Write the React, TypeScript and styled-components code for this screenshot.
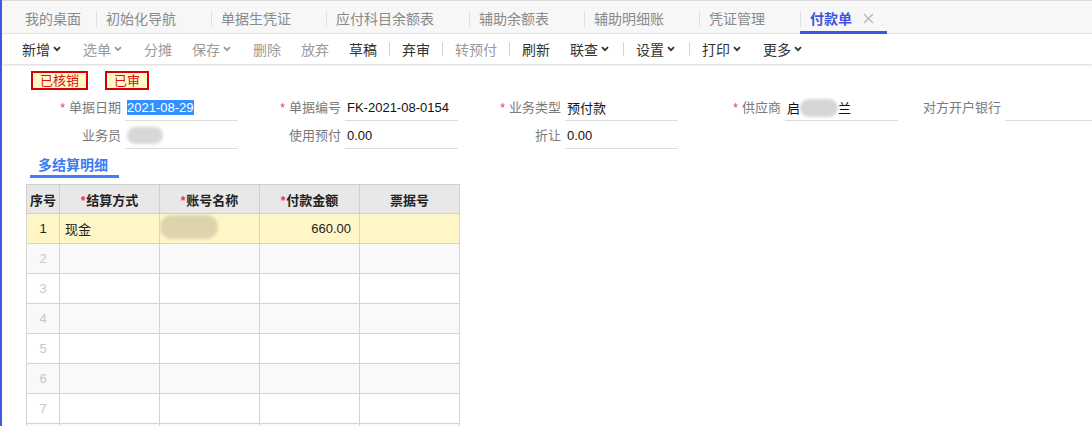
import { Fragment } from 'react';
import styled, { createGlobalStyle, css } from 'styled-components';

const GlobalStyle = createGlobalStyle`
  html, body {
    margin: 0;
    padding: 0;
    background: #fff;
  }
  body {
    font-family: "Liberation Sans", "Noto Sans CJK SC", sans-serif;
    font-size: 13px;
    color: #222;
    overflow: hidden;
  }
`;

const Page = styled.div`
  min-height: 100vh;
  border-left: 2px solid #4157e0;
  box-sizing: border-box;
`;

const TabBar = styled.div`
  display: flex;
  align-items: stretch;
  height: 32px;
  padding-left: 13px;
  background: #f7f7f8;
  border-top: 1px solid #dcdcdc;
  border-bottom: 1px solid #e5e5ee;
`;

const Tab = styled.div<{ $active?: boolean; $first?: boolean }>`
  position: relative;
  display: flex;
  align-items: center;
  padding: 2px ${p => (p.$first ? '15px' : '0')} 0 10px;
  font-size: 14px;
  color: #8a8a8a;
  white-space: nowrap;

  ${p =>
    !p.$first &&
    css`
      &::before {
        content: '';
        position: absolute;
        left: 0;
        top: 10px;
        width: 1px;
        height: 16px;
        background: #e0e0e0;
      }
    `}

  ${p =>
    p.$active &&
    css`
      color: #3f55e0;
      font-weight: bold;
      &::after {
        content: '';
        position: absolute;
        left: 0;
        right: 0;
        bottom: -1px;
        height: 3px;
        background: #3f55e0;
      }
    `}
`;

const TabClose = styled.span<{ $visible?: boolean }>`
  display: inline-flex;
  align-items: center;
  width: 35px;
  padding-left: 11px;
  box-sizing: border-box;
  visibility: ${p => (p.$visible ? 'visible' : 'hidden')};
`;

const Toolbar = styled.div`
  display: flex;
  align-items: center;
  height: 30px;
  padding-left: 10px;
  background: #fff;
  box-shadow: 0 1px 2px rgba(0, 0, 0, 0.16);
`;

const ToolButton = styled.div<{ $disabled?: boolean }>`
  display: flex;
  align-items: center;
  padding: 0 10px;
  font-size: 14px;
  color: ${p => (p.$disabled ? '#9a9a9a' : '#333')};
  white-space: nowrap;
  svg {
    margin: 0 2px 0 3px;
  }
`;

const ToolSep = styled.div`
  width: 1px;
  height: 14px;
  margin: 0 2px;
  background: #d4d4d4;
`;

const Form = styled.div`
  padding: 7px 0 0 16px;
`;

const Badges = styled.div`
  display: flex;
  gap: 17px;
  padding-left: 13px;
  margin-bottom: 5px;
`;

const Badge = styled.div`
  height: 19px;
  line-height: 15px;
  padding: 0 7px;
  border: 2px solid #d60000;
  box-sizing: border-box;
  background: #fffac8;
  color: #e01010;
  font-size: 13px;
`;

const FieldGrid = styled.div`
  display: grid;
  grid-template-columns: repeat(5, 220px);
  row-gap: 2px;
`;

const Field = styled.div`
  display: flex;
  align-items: stretch;
  height: 26px;
`;

const Label = styled.div`
  width: 107px;
  padding-right: 4px;
  box-sizing: border-box;
  text-align: right;
  line-height: 26px;
  color: #7a7a7a;
  white-space: nowrap;
`;

const Star = styled.span<{ $tight?: boolean }>`
  color: #f0305a;
  margin-right: ${p => (p.$tight ? '1px' : '4px')};
  font-size: 12px;
`;

const Input = styled.div`
  display: flex;
  align-items: center;
  width: 113px;
  padding-left: 2px;
  box-sizing: border-box;
  border-bottom: 1px solid #dcdcdc;
  white-space: nowrap;
  overflow: hidden;
  color: #111;
`;

const Selected = styled.span`
  background: #3390ff;
  color: #fff;
  line-height: 15px;
`;

const Blur = styled.span<{ $w: number; $h: number; $color: string }>`
  display: inline-block;
  width: ${p => p.$w}px;
  height: ${p => p.$h}px;
  border-radius: ${p => p.$h / 2}px;
  background: ${p => p.$color};
  filter: blur(1.5px);
`;

const SectionTabs = styled.div`
  display: flex;
  margin: 5px 0 6px 12px;
`;

const SectionTab = styled.div`
  padding: 0 11px 2px 8px;
  height: 24px;
  line-height: 22px;
  box-sizing: border-box;
  border-bottom: 3px solid #3b82f6;
  color: #3b7df0;
  font-size: 14px;
  font-weight: bold;
`;

const Grid = styled.table`
  margin-left: 8px;
  border-collapse: collapse;
  table-layout: fixed;
  width: 434px;
`;

const Th = styled.th<{ $w: number }>`
  width: ${p => p.$w - 1}px;
  height: 28px;
  padding: 0;
  border: 1px solid #cfcfcf;
  background: #e8e8e8;
  font-weight: bold;
  font-size: 13px;
  color: #222;
  text-align: center;
`;

const Row = styled.tr<{ $tone: 'active' | 'odd' | 'even' }>`
  height: 30px;
  background: ${p =>
    p.$tone === 'active' ? '#fff6c8' : p.$tone === 'odd' ? '#f9f9f9' : '#fff'};
`;

const Td = styled.td<{ $align?: 'left' | 'right' | 'center'; $muted?: boolean; $flush?: boolean }>`
  padding: 0 ${p => (p.$align === 'right' ? '8px' : '5px')};
  ${p => p.$flush && 'padding-left: 0;'}
  border: 1px solid #d4d4d4;
  text-align: ${p => p.$align || 'left'};
  color: ${p => (p.$muted ? '#c8c8c8' : '#222')};
  font-size: 13px;
  white-space: nowrap;
  overflow: hidden;
`;

const Chevron = () => (
  <svg width="8" height="6" viewBox="0 0 8 6">
    <path d="M1 1.2 L4 4.2 L7 1.2" fill="none" stroke="currentColor" strokeWidth="1.8" />
  </svg>
);

const CloseIcon = () => (
  <svg width="11" height="11" viewBox="0 0 11 11">
    <path d="M1 1 L10 10 M10 1 L1 10" stroke="#b8b8b8" strokeWidth="1.4" />
  </svg>
);

const tabs = ['我的桌面', '初始化导航', '单据生凭证', '应付科目余额表', '辅助余额表', '辅助明细账', '凭证管理', '付款单'];

type Tool = { label: string; menu?: boolean; disabled?: boolean; sep?: boolean };

const tools: Tool[] = [
  { label: '新增', menu: true },
  { label: '选单', menu: true, disabled: true },
  { label: '分摊', disabled: true },
  { label: '保存', menu: true, disabled: true },
  { label: '删除', disabled: true },
  { label: '放弃', disabled: true },
  { label: '草稿', sep: true },
  { label: '弃审', sep: true },
  { label: '转预付', disabled: true, sep: true },
  { label: '刷新' },
  { label: '联查', menu: true, sep: true },
  { label: '设置', menu: true, sep: true },
  { label: '打印', menu: true },
  { label: '更多', menu: true },
];

export default function App() {
  return (
    <Page>
      <GlobalStyle />
      <TabBar>
        {tabs.map((t, i) => {
          const active = i === tabs.length - 1;
          return (
            <Tab key={t} $first={i === 0} $active={active}>
              {t}
              {i > 0 && (
                <TabClose $visible={active}>
                  <CloseIcon />
                </TabClose>
              )}
            </Tab>
          );
        })}
      </TabBar>

      <Toolbar>
        {tools.map(t => (
          <Fragment key={t.label}>
            <ToolButton $disabled={t.disabled}>
              {t.label}
              {t.menu && <Chevron />}
            </ToolButton>
            {t.sep && <ToolSep />}
          </Fragment>
        ))}
      </Toolbar>

      <Form>
        <Badges>
          <Badge>已核销</Badge>
          <Badge>已审</Badge>
        </Badges>

        <FieldGrid>
          <Field>
            <Label><Star>*</Star>单据日期</Label>
            <Input><Selected>2021-08-29</Selected></Input>
          </Field>
          <Field>
            <Label><Star>*</Star>单据编号</Label>
            <Input>FK-2021-08-0154</Input>
          </Field>
          <Field>
            <Label><Star>*</Star>业务类型</Label>
            <Input>预付款</Input>
          </Field>
          <Field>
            <Label><Star>*</Star>供应商</Label>
            <Input>
              启<Blur $w={38} $h={18} $color="#d6d6d6" />兰
            </Input>
          </Field>
          <Field>
            <Label>对方开户银行</Label>
            <Input />
          </Field>

          <Field>
            <Label>业务员</Label>
            <Input>
              <Blur $w={36} $h={17} $color="#d8d8d8" />
            </Input>
          </Field>
          <Field>
            <Label>使用预付</Label>
            <Input>0.00</Input>
          </Field>
          <Field>
            <Label>折让</Label>
            <Input>0.00</Input>
          </Field>
        </FieldGrid>

        <SectionTabs>
          <SectionTab>多结算明细</SectionTab>
        </SectionTabs>

        <Grid>
          <thead>
            <tr>
              <Th $w={33}>序号</Th>
              <Th $w={100}><Star $tight>*</Star>结算方式</Th>
              <Th $w={100}><Star $tight>*</Star>账号名称</Th>
              <Th $w={100}><Star $tight>*</Star>付款金额</Th>
              <Th $w={100}>票据号</Th>
            </tr>
          </thead>
          <tbody>
            <Row $tone="active">
              <Td $align="center">1</Td>
              <Td>现金</Td>
              <Td $flush>
                <Blur $w={58} $h={24} $color="#ddd4ae" />
              </Td>
              <Td $align="right">660.00</Td>
              <Td />
            </Row>
            {[2, 3, 4, 5, 6, 7, 8].map(n => (
              <Row key={n} $tone={n % 2 === 0 ? 'odd' : 'even'}>
                <Td $align="center" $muted>{n < 8 ? n : ''}</Td>
                <Td />
                <Td />
                <Td />
                <Td />
              </Row>
            ))}
          </tbody>
        </Grid>
      </Form>
    </Page>
  );
}
